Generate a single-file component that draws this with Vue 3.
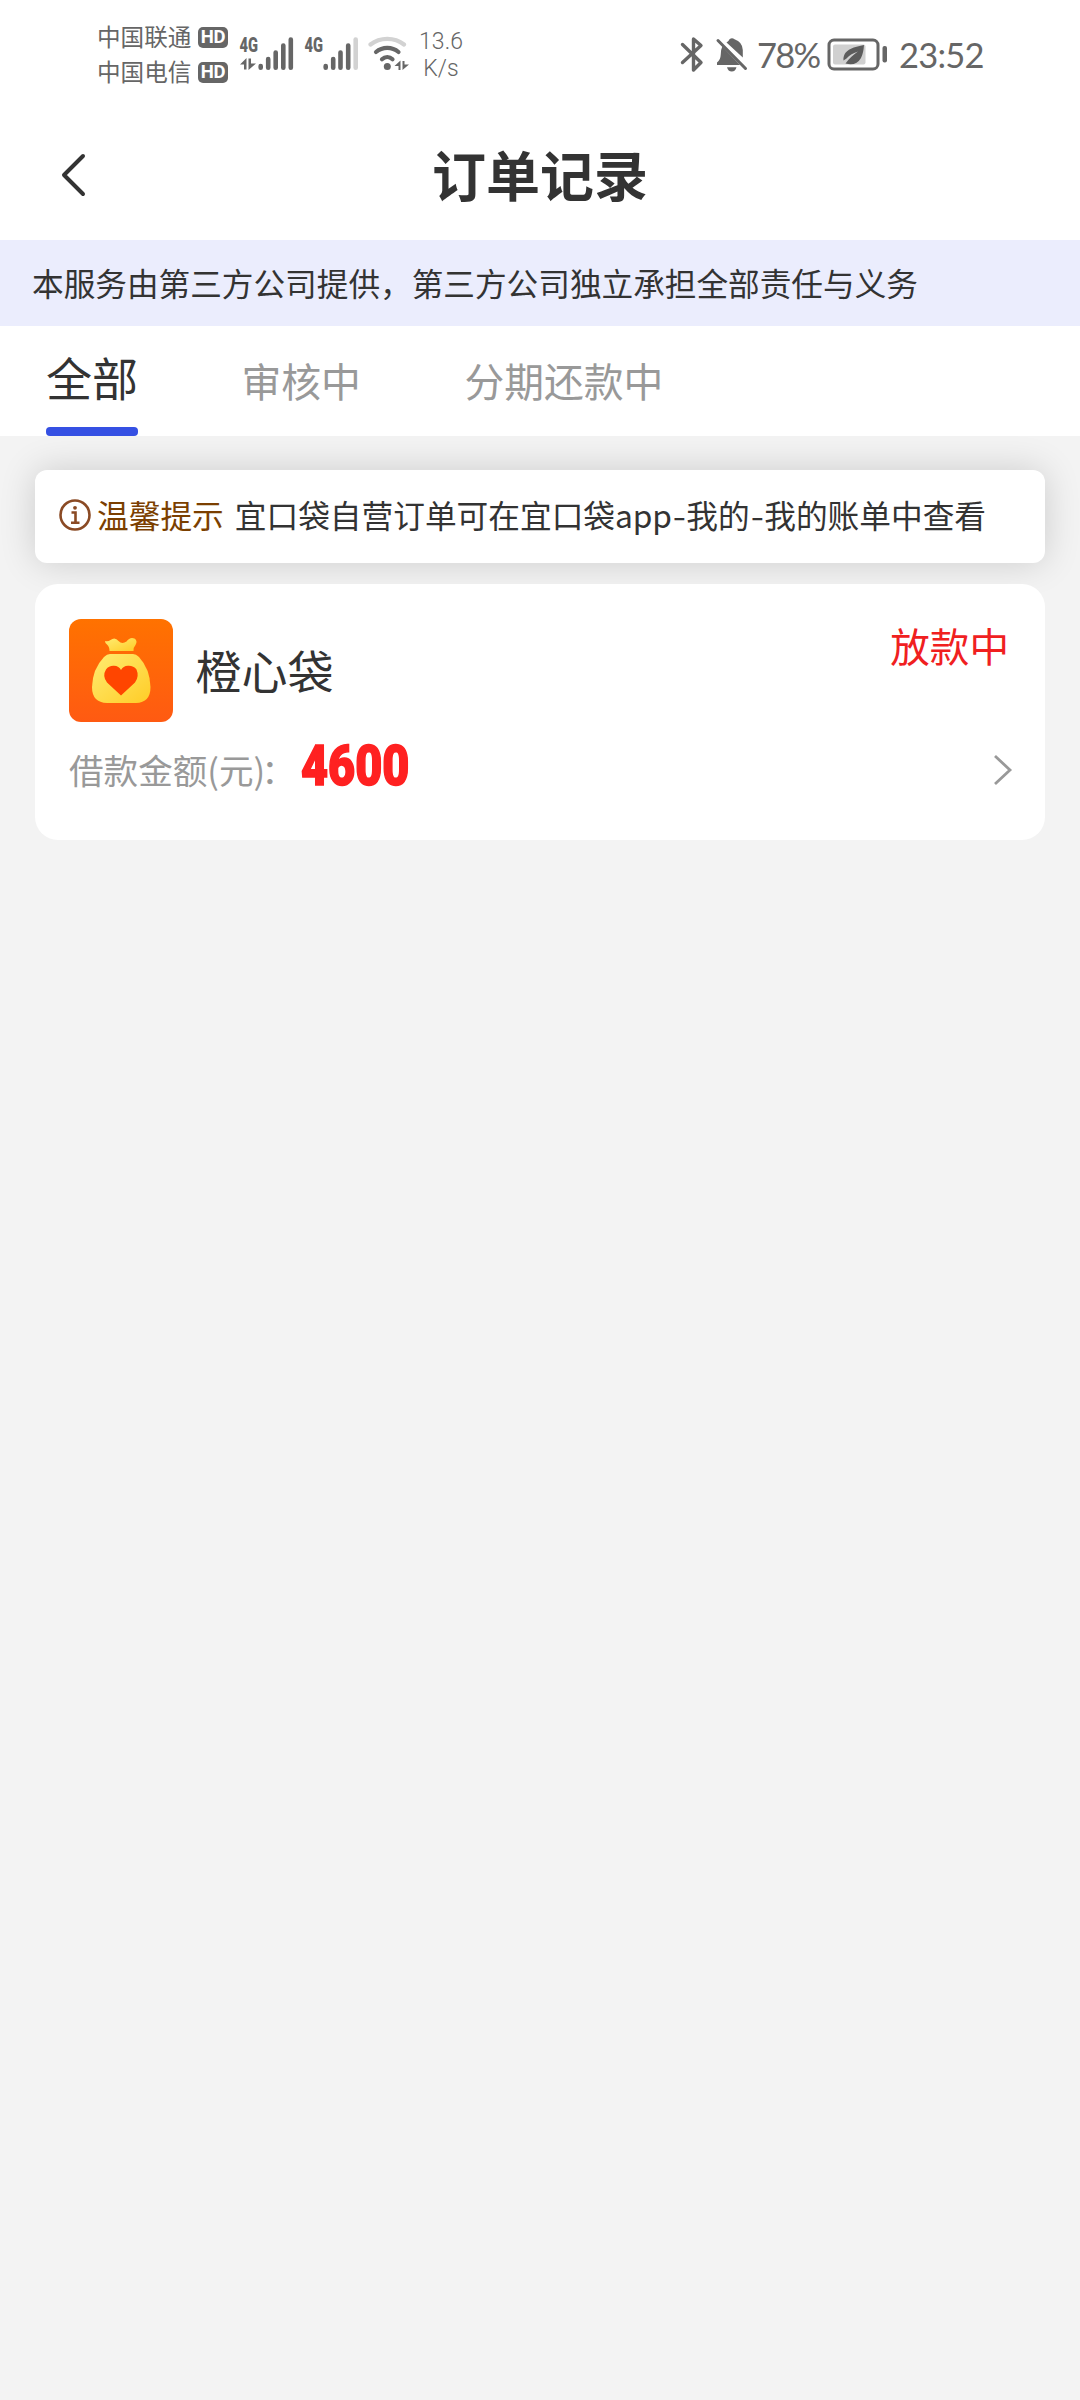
<script setup>
import { ref } from 'vue'

const tabs = ['全部', '审核中', '分期还款中']
const active = ref(0)
const carriers = ['中国联通', '中国电信']
const orders = [{ name: '橙心袋', status: '放款中', amount: '4600' }]
</script>

<template>
  <div class="page">
    <header class="status-bar">
      <div class="carriers">
        <div v-for="c in carriers" :key="c" class="carrier">
          <span class="carrier-name">{{ c }}</span><span class="hd">HD</span>
        </div>
      </div>
      <svg class="signal-a" width="56" height="42" viewBox="238 29 56 42">
        <text class="net" x="239.5" y="52" textLength="18.5" lengthAdjust="spacingAndGlyphs">4G</text>
        <path d="M240 64.500 L246.500 58 V69.500 H244 V64.500Z M248.500 58.500 H251 V63.500 H256 L248.500 70Z" fill="#666" />
        <g stroke="#666" stroke-width="4.600" stroke-linecap="round">
          <path d="M260.700 66v1.700M268.200 59v8.700M275.700 52.500v15.200M283.300 45.500v22.200M290.800 39.500v28.200" />
        </g>
      </svg>
      <svg class="signal-b" width="56" height="42" viewBox="303 29 56 42">
        <text class="net" x="304.500" y="52" textLength="18.5" lengthAdjust="spacingAndGlyphs">4G</text>
        <g stroke="#666" stroke-width="4.600" stroke-linecap="round">
          <path d="M325.700 66v1.700M333.200 59v8.700M340.500 52.500v15.200M348.200 45.500v22.200" />
          <path d="M355.700 39.500v28.200" stroke="#d2d2d2" />
        </g>
      </svg>
      <svg class="wifi" width="42" height="36" viewBox="368 35 42 36">
        <g fill="none" stroke="#666" stroke-width="4.200" stroke-linecap="round">
          <path d="M370.500 44.500C380 37 394.500 37 404 44.500" stroke="#d2d2d2" />
          <path d="M376 52C382.500 46.600 392 46.600 398.500 52" />
          <path d="M382 59.300C385 56.500 389.500 56.500 392.500 59.300" />
        </g>
        <circle cx="387.300" cy="66.600" r="3.500" fill="#666" />
        <path d="M394.500 66 L400.500 60.500 V70 H398.500 V66Z M402.500 61 H404.500 V64.500 H409 L402.500 70Z" fill="#666" />
      </svg>
      <div class="speed"><span>13.6</span><span>K/s</span></div>
      <div class="right">
        <svg width="24" height="38" viewBox="680 36 24 38" fill="none" stroke="#666" stroke-width="3.400" stroke-linejoin="round" stroke-linecap="round">
          <path d="M682.500 44.500 L701 62.500 L693.500 70 V39 L701 45.500 L682.500 62.500" />
        </svg>
        <svg class="bell" width="34" height="38" viewBox="715 36 34 38">
          <path d="M722.300 46.500 L740 65 H717 V62.500 Q720.500 60 720.700 55 Q720.700 49.500 722.300 46.500Z M726.500 42.500 Q728.800 41 729.500 39.300 Q732 37 734.500 39.300 Q742.500 42 742.800 50 V57.500Z M727 67.300 H736.500 Q735.500 71.500 731.800 71.500 Q728 71.500 727 67.300Z" fill="#666" />
          <path d="M718 40.500 L745.500 68.500" stroke="#666" stroke-width="3" stroke-linecap="round" />
        </svg>
        <span class="pct">78%</span>
        <svg class="battery" width="62" height="34" viewBox="825 38 62 34">
          <rect x="828" y="40" width="49" height="29" rx="5" fill="#fff" stroke="#666" stroke-width="3" />
          <rect x="832" y="44.500" width="32.500" height="20" rx="2" fill="#d0d0d0" />
          <path d="M863 45 C851 47.500 842 50 842.500 60.500 L845.500 58.500 Q849 54 857 51.500 Q849 57 844.500 63.500 Q855 66.500 860 58 Q862.500 53 863 45Z" fill="#5c5c5c" />
          <rect x="881.500" y="46" width="4.500" height="16.500" rx="2" fill="#666" />
        </svg>
        <span class="clock">23:52</span>
      </div>
    </header>

    <nav class="title-bar">
      <svg class="back" width="28" height="46" viewBox="0 0 28 46" fill="none" stroke="#333" stroke-width="4" stroke-linecap="round" stroke-linejoin="round">
        <path d="M24 4 L5 23 L24 42" />
      </svg>
      <h1>订单记录</h1>
    </nav>

    <div class="notice">本服务由第三方公司提供，第三方公司独立承担全部责任与义务</div>

    <div class="tabs">
      <div v-for="(t, i) in tabs" :key="t" class="tab" :class="{ active: i === active }" @click="active = i">{{ t }}</div>
    </div>

    <main>
      <section class="tip">
        <svg width="32" height="32" viewBox="0 0 32 32" fill="none" stroke="#8a4a24" stroke-width="2.600">
          <circle cx="16" cy="16" r="14.500" />
          <path d="M12.500 13.500H16.500V23.500M12 23.800H20.500" />
          <circle cx="16" cy="8.800" r="1.900" fill="#8a4a24" stroke="none" />
        </svg>
        <b>温馨提示</b>
        <span>宜口袋自营订单可在宜口袋<i>app</i><em>-</em>我的<em>-</em>我的账单中查看</span>
      </section>

      <section v-for="o in orders" :key="o.name" class="order">
        <div class="order-head">
          <svg class="logo" width="104" height="103" viewBox="0 0 104 103">
            <defs>
              <linearGradient id="bg" x1="0" y1="0" x2="0" y2="1"><stop offset="0" stop-color="#ff7200" /><stop offset="1" stop-color="#ff5a12" /></linearGradient>
              <linearGradient id="bag" x1="0" y1="0" x2="1" y2="1"><stop offset="0" stop-color="#ffec72" /><stop offset="1" stop-color="#ffcc26" /></linearGradient>
            </defs>
            <rect width="104" height="103" rx="12" fill="url(#bg)" />
            <path d="M36 22 Q39 23 41.500 21 Q46 17.500 49.500 22 Q53 25.500 57.500 22.500 Q61 17.500 65.500 19.500 Q69 22 66.500 26 Q64.500 28 64.500 32 H40.500 Q40.500 27.500 38 25.500 Q36 24 36 22Z" fill="url(#bag)" />
            <path d="M41 35 H64 Q67 35 70 38 Q81 50 81.500 68 Q81.500 83.500 67 84 H38 Q23 83.500 23 68 Q23.500 50 35 38 Q38 35 41 35Z" fill="url(#bag)" />
            <path d="M52 76.500 L38 63.500 Q33 57 37 50.500 Q40 46.500 45 46.800 Q50 47 52 51 Q54 47 59 46.800 Q64.500 46.500 67.500 50.500 Q70.500 57.500 66 63.500Z" fill="#ff4500" />
          </svg>
          <span class="name">{{ o.name }}</span>
          <span class="state">{{ o.status }}</span>
        </div>
        <div class="order-foot">
          <span class="label">借款金额(元)<i>：</i></span>
          <span class="amount">{{ o.amount }}</span>
          <svg class="chevron" width="20" height="32" viewBox="0 0 20 32" fill="none" stroke="#999" stroke-width="2.800">
            <path d="M2 2 L17 16 L2 30" />
          </svg>
        </div>
      </section>
    </main>
  </div>
</template>

<style>
body { background: #f3f3f3; }
</style>

<style scoped>
.page {
  width: 1080px;
  min-height: 2400px;
  background: #f3f3f3;
  color: #333;
  font-family: "Noto Sans CJK SC", sans-serif;
}
svg { display: block; flex: none; }
span, h1, b { white-space: nowrap; }
.status-bar {
  display: flex;
  align-items: flex-start;
  height: 110px;
  padding: 0 97px 0 97px;
  box-sizing: border-box;
  background: #fff;
  color: #666;
}
.carriers { width: 132px; padding-top: 20px; }
.carrier { display: flex; align-items: center; height: 35px; }
.carrier-name { width: 101px; font-size: 23.600px; line-height: 33px; padding-bottom: 2px; }
.hd {
  width: 30px;
  height: 21px;
  border-radius: 5px;
  background: #666;
  color: #fff;
  font: 700 18.500px/21px Roboto, sans-serif;
  letter-spacing: -.3px;
  text-align: center;
}
.net { font: 900 21px Roboto, sans-serif; fill: #666; }
.signal-a { margin: 29px 0 0 9px; }
.signal-b { margin: 29px 0 0 9px; }
.wifi { margin: 35px 0 0 9px; }
.speed {
  display: flex;
  flex-direction: column;
  align-items: center;
  width: 48px;
  margin: 28px 0 0 7px;
  font: 300 23px/27px Roboto, sans-serif;
}
.right {
  display: flex;
  align-items: center;
  height: 38px;
  margin: 36px -4px 0 auto;
}
.bell { margin-left: 11px; }
.pct { width: 68px; margin-left: 8px; font: 34.500px/38px Lato, sans-serif; letter-spacing: -1.700px; }
.battery { margin-left: 1px; }
.clock { width: 88px; margin-left: 11px; font: 34.500px/38px Lato, sans-serif; letter-spacing: -.800px; }
.title-bar {
  display: flex;
  align-items: center;
  justify-content: center;
  height: 130px;
  background: #fff;
}
.back { margin: 0 345px 0 59px; }
h1 { margin: -3px auto 0 0; font-size: 54px; font-weight: 700; line-height: 80px; }
.notice {
  height: 86px;
  padding-left: 32px;
  background: #ebedfd;
  font-size: 31.650px;
  line-height: 85px;
  white-space: nowrap;
}
.tabs {
  display: flex;
  height: 110px;
  padding-left: 46px;
  background: #fff;
}
.tab {
  box-sizing: border-box;
  height: 110px;
  margin-right: 103.500px;
  color: #999;
  font-size: 39.800px;
  line-height: 107px;
}
.tab.active {
  display: flex;
  flex-direction: column;
  color: #333;
  font-size: 46px;
  line-height: 101px;
}
.tab.active::after { content: ""; height: 9px; border-radius: 4px; background: #3550e3; }
main { padding: 34px 35px 0; overflow: hidden; }
.tip {
  display: flex;
  align-items: center;
  height: 93px;
  padding-left: 24px;
  border-radius: 12px;
  background: #fff;
  box-shadow: 0 0 36px rgba(0, 0, 0, .16);
  font-size: 31.700px;
}
.tip b, .tip span { line-height: 88px; padding-bottom: 5px; }
.tip svg { margin-top: -3px; }
.tip b { margin: 0 11px 0 6px; color: #7b3f00; font-weight: 400; }
.tip i { font-style: normal; letter-spacing: -.100px; }
.tip em { display: inline-block; width: 14.500px; font-style: normal; text-align: center; transform: scaleX(1.200); }
.order {
  height: 256px;
  margin-top: 21px;
  padding: 35px 34px 0;
  box-sizing: border-box;
  border-radius: 23px;
  background: #fff;
}
.order-head { display: flex; align-items: flex-start; height: 103px; }
.name { margin: 15px 0 0 22.500px; font-size: 46px; line-height: 70px; }
.state { margin: -3px 2px 0 auto; color: #f0201f; font-size: 39.600px; line-height: 58px; }
.order-foot { display: flex; align-items: center; height: 96px; }
.label { width: 232px; margin-top: -2px; color: #999; font-size: 34.600px; line-height: 50px; }
.label i { margin-left: -4px; font-style: normal; }
.amount {
  width: 110px;
  margin-top: -9px;
  color: #ff2121;
  font: 900 55px/60px Roboto, sans-serif;
  -webkit-text-stroke: 1.600px #ff2121;
  transform: scaleX(.85);
  transform-origin: left center;
}
.chevron { margin-right: -2px; margin-left: auto; }
</style>
